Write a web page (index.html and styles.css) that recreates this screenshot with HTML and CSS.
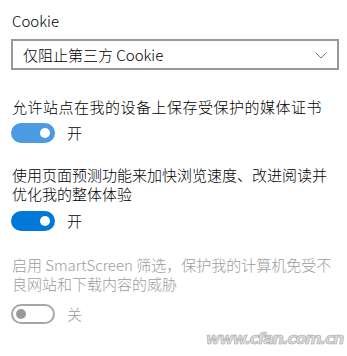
FILE: index.html
```html
<!DOCTYPE html>
<html lang="zh-CN">
<head>
<meta charset="utf-8">
<link rel="stylesheet" href="styles.css">
</head>
<body>
<div class="page">
  <div class="label">Cookie</div>
  <div class="select">
    <span class="select-text">仅阻止第三方 Cookie</span>
    <svg class="chevron" width="12" height="7" viewBox="0 0 12 7"><polyline points="0.5,0.5 6,6 11.5,0.5" fill="none" stroke="#7a7a7a" stroke-width="1"/></svg>
  </div>

  <div class="setting s1">
    <div class="desc wide">允许站点在我的设备上保存受保护的媒体证书</div>
    <div class="toggle-row">
      <span class="toggle on light"><span class="knob"></span></span>
      <span class="state">开</span>
    </div>
  </div>

  <div class="setting s2">
    <div class="desc">使用页面预测功能来加快浏览速度、改进阅读并优化我的整体体验</div>
    <div class="toggle-row">
      <span class="toggle on"><span class="knob"></span></span>
      <span class="state">开</span>
    </div>
  </div>

  <div class="setting s3 disabled">
    <div class="desc">启用 SmartScreen 筛选，保护我的计算机免受不良网站和下载内容的威胁</div>
    <div class="toggle-row">
      <span class="toggle off"><span class="knob"></span></span>
      <span class="state">关</span>
    </div>
  </div>
  <div class="watermark">www.cfan.com.cn</div>
</div>
</body>
</html>
```

FILE: styles.css
```css
html, body {
  margin: 0;
  padding: 0;
  background: #ffffff;
}
.page {
  position: relative;
  width: 347px;
  height: 356px;
  overflow: hidden;
  padding: 11px 0 0 11px;
  box-sizing: border-box;
  font-family: "Noto Sans CJK SC", "Noto Sans", sans-serif;
  font-weight: 300;
  font-size: 15px;
  color: #000;
}
.label {
  line-height: 20px;
  padding-left: 1px;
}
.select {
  margin-top: 8px;
  width: 328px;
  height: 31px;
  box-sizing: border-box;
  border: 2px solid #999999;
  display: flex;
  align-items: center;
  justify-content: space-between;
  padding: 0 10px 0 10px;
}
.select-text {
  line-height: 20px;
}
.chevron {
  display: block;
  margin-top: 1px;
}
.setting {
  padding-left: 1px;
}
.s1 { margin-top: 27px; }
.s2 { margin-top: 22px; }
.s3 { margin-top: 24px; }
.desc {
  width: 328px;
  line-height: 19px;
}
.desc.wide {
  letter-spacing: 0.5px;
}
.toggle-row {
  display: flex;
  align-items: center;
  margin-top: 8px;
  margin-left: -1px;
}
.s1 .toggle-row { margin-top: 7px; }
.s3 .toggle-row { margin-top: 11px; }
.toggle {
  position: relative;
  width: 44px;
  height: 20px;
  box-sizing: border-box;
  border-radius: 10px;
  display: flex;
  align-items: center;
}
.toggle.on {
  background: #0078d7;
  justify-content: flex-end;
  padding-right: 5px;
}
.toggle.on.light {
  background: #4a9be3;
}
.toggle.on .knob {
  width: 10px;
  height: 10px;
  border-radius: 50%;
  background: #ffffff;
}
.toggle.off {
  border: 2px solid #a6a6a6;
  padding-left: 3px;
}
.toggle.off .knob {
  width: 10px;
  height: 10px;
  border-radius: 50%;
  background: #9a9a9a;
}
.state {
  margin-left: 12px;
  line-height: 20px;
}
.disabled {
  color: #9c9c9c;
}
.watermark {
  position: absolute;
  right: 4px;
  bottom: 8px;
  font-family: "DejaVu Sans", sans-serif;
  font-weight: bold;
  font-style: italic;
  font-size: 16px;
  letter-spacing: -1.4px;
  color: #dcdcdc;
  -webkit-text-stroke: 0.6px #a8a8a8;
}
```
